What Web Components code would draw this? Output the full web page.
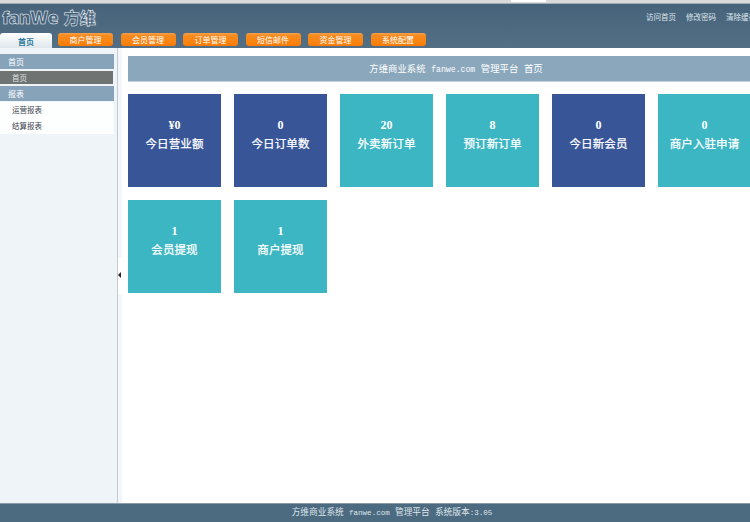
<!DOCTYPE html>
<html>
<head>
<meta charset="utf-8">
<style>
    html, body { margin:0; padding:0; height:100%; overflow:hidden; background:#fff; }
    body { font-family:"Liberation Mono","Noto Sans CJK SC",monospace; font-size:9px; }
    admin-app { height:522px; width:784px; }
    .lat { font-family:"Liberation Mono",monospace; font-size:.87em; }
</style>
</head>
<body>
<admin-app>
    <top-bar slot="top"></top-bar>
    <side-menu slot="side">
        <menu-group label="首页">
            <menu-link active>首页</menu-link>
        </menu-group>
        <menu-group label="报表">
            <menu-link>运营报表</menu-link>
            <menu-link>结算报表</menu-link>
        </menu-group>
    </side-menu>
    <main-panel slot="main">
        <span slot="title">方维商业系统 <span class="lat">fanwe.com</span> 管理平台 首页</span>
        <stat-card value="¥0" label="今日营业额" kind="dark"></stat-card>
        <stat-card value="0" label="今日订单数" kind="dark"></stat-card>
        <stat-card value="20" label="外卖新订单"></stat-card>
        <stat-card value="8" label="预订新订单"></stat-card>
        <stat-card value="0" label="今日新会员" kind="dark"></stat-card>
        <stat-card value="0" label="商户入驻申请"></stat-card>
        <stat-card value="1" label="会员提现"></stat-card>
        <stat-card value="1" label="商户提现"></stat-card>
    </main-panel>
    <page-footer slot="foot">方维商业系统 <span class="lat">fanwe.com</span> 管理平台 系统版本<span class="lat">:3.05</span></page-footer>
</admin-app>

<script>
class AdminApp extends HTMLElement {
    constructor() {
        super();
        this.attachShadow({mode:'open'}).innerHTML = `
        <style>
            :host { display:flex; flex-direction:column; overflow:hidden; }
            .middle { flex:1; display:flex; min-height:0; }
            .split { width:5px; flex:none; background:#f3f6fa; border-left:1px solid #c4cad1; position:relative; box-sizing:border-box; }
            .split i { position:absolute; left:0; top:210px; width:4px; height:36px; background:#fff; }
            .split b { position:absolute; left:0; top:224px; border:3px solid transparent; border-right:3px solid #222; border-left:0; }
        </style>
        <slot name="top"></slot>
        <div class="middle">
            <slot name="side"></slot>
            <div class="split"><i></i><b></b></div>
            <slot name="main"></slot>
        </div>
        <slot name="foot"></slot>`;
    }
}

class TopBar extends HTMLElement {
    constructor() {
        super();
        const tabs = ['商户管理','会员管理','订单管理','短信邮件','资金管理','系统配置'];
        this.attachShadow({mode:'open'}).innerHTML = `
        <style>
            :host { display:block; flex:none; background:#d9d9d9; position:relative; }
            .gap { position:absolute; left:511px; top:0; width:35px; height:2px; background:#fff; }
            .bar { margin-top:3px; height:45px; box-sizing:border-box; border-top:1px solid #9fabb6; background:linear-gradient(#47637b,#536f85); display:flex; flex-direction:column; }
            .row { flex:1; display:flex; justify-content:space-between; align-items:flex-start; min-height:0; }
            .logo { display:flex; align-items:center; height:25px; padding-left:2px; color:#43607a; -webkit-text-stroke:.55px #f2f6f9; }
            .logo .en { font:800 17.5px "Open Sans",sans-serif; letter-spacing:-.6px; }
            .logo .cn { font:900 16px "Noto Sans CJK SC",sans-serif; margin-left:6px; }
            .links { display:flex; gap:10px; color:#dfe6ec; font:7.5px/11px "Noto Sans CJK SC",sans-serif; white-space:nowrap; margin-top:7px; margin-right:28px; }
            .tabs { display:flex; align-items:flex-end; height:15px; }
            .home { width:52px; height:15px; margin-right:6px; background:linear-gradient(#fff,#dfe7ec); border-radius:3px 3px 0 0; color:#2c7a9c; font:700 8px/17px "Noto Sans CJK SC",sans-serif; text-align:center; }
            .tab { width:55px; height:13px; margin-right:7.5px; margin-bottom:2px; background:linear-gradient(#f6a24e,#f68a1e 20%,#f98412 70%,#fd7a00); border-radius:3px; color:#fff; font:8px/13px "Noto Sans CJK SC",sans-serif; text-align:center; }
        </style>
        <div class="gap"></div>
        <div class="bar">
            <div class="row">
                <div class="logo"><span class="en">fanWe</span><span class="cn">方维</span></div>
                <div class="links"><span>访问首页</span><span>修改密码</span><span>清除缓存</span></div>
            </div>
            <div class="tabs">
                <div class="home">首页</div>
                ${tabs.map(t => `<div class="tab">${t}</div>`).join('')}
            </div>
        </div>`;
    }
}

class SideMenu extends HTMLElement {
    constructor() {
        super();
        this.attachShadow({mode:'open'}).innerHTML = `
        <style>
            :host { display:block; width:117px; flex:none; box-sizing:border-box; background:#eff4f9; padding-top:6px; padding-right:3px; }
        </style>
        <slot></slot>`;
    }
}

class MenuGroup extends HTMLElement {
    constructor() {
        super();
        this.attachShadow({mode:'open'}).innerHTML = `
        <style>
            :host { display:block; }
            .head { height:15px; margin-bottom:1px; background:#86a3ba; color:#fff; font:8px/15px "Noto Sans CJK SC",sans-serif; padding-left:8px; }
        </style>
        <div class="head">${this.getAttribute('label')}</div>
        <slot></slot>`;
    }
}

class MenuLink extends HTMLElement {
    constructor() {
        super();
        this.attachShadow({mode:'open'}).innerHTML = `
        <style>
            :host { display:block; height:16px; box-sizing:border-box; background:#fdfefe; color:#3e4650; font:7.5px/16px "Noto Sans CJK SC",sans-serif; padding-left:12px; }
            :host([active]) { height:13px; line-height:13px; margin:2px 1px 2px 0; background:#6f7473; color:#dfe3e3; }
        </style>
        <slot></slot>`;
    }
}

class MainPanel extends HTMLElement {
    constructor() {
        super();
        this.attachShadow({mode:'open'}).innerHTML = `
        <style>
            :host { display:block; flex:1; min-width:0; background:#fff; padding:8px 0 0 6px; }
            .title { height:26px; background:#8aa7bc; border-bottom:1px solid #c4d3df; box-sizing:border-box; color:#fff; text-align:center; font:9.4px/27px "Liberation Mono","Noto Sans CJK SC",monospace; white-space:nowrap; }
            .grid { display:grid; grid-template-columns:repeat(6,93px); grid-auto-rows:93px; gap:13px; margin-top:12px; }
        </style>
        <div class="title"><slot name="title"></slot></div>
        <div class="grid"><slot></slot></div>`;
    }
}

class StatCard extends HTMLElement {
    constructor() {
        super();
        this.attachShadow({mode:'open'}).innerHTML = `
        <style>
            :host { display:flex; flex-direction:column; align-items:center; background:#3cb6c3; color:#fff; padding-top:24px; box-sizing:border-box; }
            :host([kind="dark"]) { background:#375597; }
            .v { font:700 12px/14px "Liberation Serif",serif; }
            .l { font:400 11.5px/18px "Noto Sans CJK SC",sans-serif; -webkit-text-stroke:.25px #fff; letter-spacing:.1px; margin-top:2px; white-space:nowrap; }
        </style>
        <div class="v">${this.getAttribute('value')}</div>
        <div class="l">${this.getAttribute('label')}</div>`;
    }
}

class PageFooter extends HTMLElement {
    constructor() {
        super();
        this.attachShadow({mode:'open'}).innerHTML = `
        <style>
            :host { display:block; flex:none; height:19px; box-sizing:border-box; background:#4c6a80; border-top:1px solid #8b9aa6; color:#dde4ea; text-align:center; font:8.7px/18px "Liberation Mono","Noto Sans CJK SC",monospace; white-space:nowrap; }
        </style>
        <slot></slot>`;
    }
}

customElements.define('admin-app', AdminApp);
customElements.define('top-bar', TopBar);
customElements.define('side-menu', SideMenu);
customElements.define('menu-group', MenuGroup);
customElements.define('menu-link', MenuLink);
customElements.define('main-panel', MainPanel);
customElements.define('stat-card', StatCard);
customElements.define('page-footer', PageFooter);
</script>
</body>
</html>
